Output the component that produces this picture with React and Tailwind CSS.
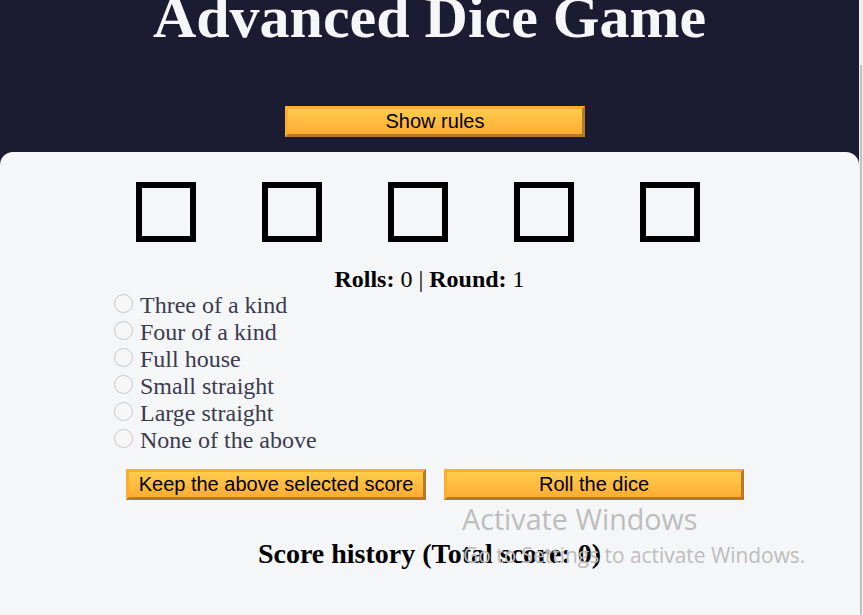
import React from 'react'

const serif = "font-['Liberation_Serif','Times_New_Roman',serif]"
const sans = "font-['Liberation_Sans',Arial,sans-serif]"

const options = ['Three of a kind', 'Four of a kind', 'Full house', 'Small straight', 'Large straight', 'None of the above']

const GoldButton = ({ children }) => (
  <button className={`${sans} w-[300px] h-[31px] text-[20px] leading-[23px] text-black bg-linear-to-b from-[#fecc4c] to-[#ffac33] border-[3px] border-[#feac32] border-r-[#b47a28] border-b-[#b47a28]`}>
    {children}
  </button>
)

const App = () => {
  return (
    <div className="relative flex h-[615px] overflow-hidden bg-[#1b1b32]">
      <div className="flex w-[859px] flex-col">
        <h1 className={`${serif} mt-[-17px] text-center text-[60px] leading-[69px] font-bold text-[#f5f6f7]`}>Advanced Dice Game</h1>
        <div className="mt-[54px] ml-[285px]">
          <GoldButton>Show rules</GoldButton>
        </div>
        <main className="mt-[15px] flex-1 rounded-t-[13px] bg-[#f5f6f7] pt-[30px]">
          <div className="flex gap-[66px] pl-[136px]">
            {[0, 1, 2, 3, 4].map(i => (
              <div key={i} className="h-[60px] w-[60px] border-[6px] border-black" />
            ))}
          </div>
          <p className={`${serif} mt-[24px] text-center text-[24px] leading-[26px] text-black`}>
            <b>Rolls:</b> 0 | <b>Round:</b> 1
          </p>
          <div className="pl-[114px]">
            {options.map(o => (
              <label key={o} className={`${serif} flex h-[27px] items-start text-[24px] leading-[27px] text-[#3b3b4f]`}>
                <span className="mt-[2px] h-[19px] w-[19px] shrink-0 rounded-full border-[1.5px] border-[#c9c9c9] bg-[#f7f7f7]" />
                <span className="ml-[7px]">{o}</span>
              </label>
            ))}
          </div>
          <div className="mt-[15px] flex gap-[18px] pl-[126px]">
            <GoldButton>Keep the above selected score</GoldButton>
            <GoldButton>Roll the dice</GoldButton>
          </div>
          <h2 className={`${serif} mt-[38px] text-center text-[28px] leading-[32px] font-bold text-black`}>Score history (Total score: 0)</h2>
        </main>
      </div>
      <div className="flex w-[4px] flex-col bg-[#f1f1f1]">
        <div className="mt-[65px] ml-[1px] w-[2px] flex-1 bg-[#c1c1c1]" />
      </div>
      <div className="pointer-events-none absolute top-[505px] left-[462px] flex flex-col font-['Open_Sans',sans-serif] text-[#bdbdbd]">
        <span className="text-[28.7px] leading-[28px]">Activate Windows</span>
        <span className="mt-[12px] ml-[1px] text-[20.9px] leading-[20px]">Go to Settings to activate Windows.</span>
      </div>
    </div>
  )
}

export default App
